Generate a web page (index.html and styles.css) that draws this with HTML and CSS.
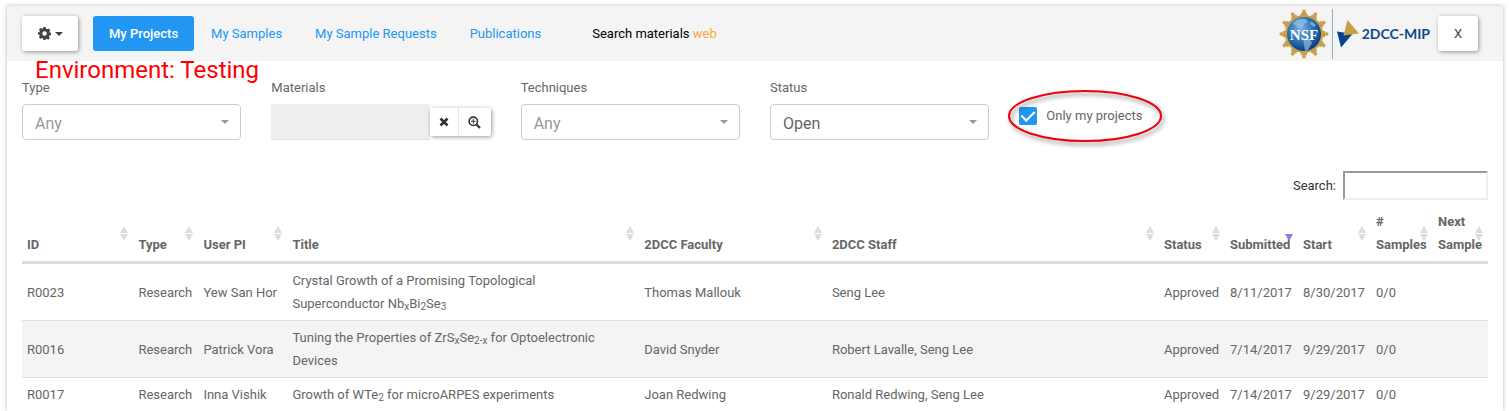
FILE: index.html
```html
<!DOCTYPE html>
<html lang="en">
<head>
<meta charset="utf-8">
<title>My Projects</title>
<link rel="stylesheet" href="styles.css">
</head>
<body>
<main class="panel">
  <header class="topbar">
    <button class="btn btn-menu" type="button" aria-label="Settings">
      <svg width="13" height="13" viewBox="0 0 16 16" aria-hidden="true"><path fill="#444" fill-rule="evenodd" d="M6.600 0h2.800l.5 2.200 1.200.6 2.100-1 1.900 2-1.100 1.900.5 1.100 1.500.4v2.900l-2 .5-.5 1.200 1.100 2-2 1.900-1.900-1.100-1.200.5L9 16H6.600l-.5-2.100-1.100-.5-2 1.100-1.900-1.900 1.100-2-.5-1.100L0 9.400V6.700l1.900-.5.4-1.100-1.100-2 2-1.900 1.900 1.100 1-.5zM8 5.200a2.800 2.800 0 1 0 0 5.600 2.800 2.800 0 0 0 0-5.600z"/></svg>
      <span class="caret"></span>
    </button>
    <nav class="tabs">
      <a class="tab tab-active" href="#">My Projects</a>
      <a class="tab" href="#">My Samples</a>
      <a class="tab" href="#">My Sample Requests</a>
      <a class="tab" href="#">Publications</a>
    </nav>
    <div class="materials-link">Search materials <a href="#">web</a></div>
    <div class="brand">
      <svg class="nsf" width="50" height="50" viewBox="0 0 50 50" role="img" aria-label="NSF">
        <defs>
          <radialGradient id="globe" cx="40%" cy="35%" r="65%">
            <stop offset="0" stop-color="#7fb2dc"/><stop offset=".55" stop-color="#2f74b5"/><stop offset="1" stop-color="#0b3f83"/>
          </radialGradient>
          <g id="ray"><path d="M20 8 23.500 3.500h3L30 8z" fill="#c6a04a"/><circle cx="25" cy="2.200" r="1.800" fill="#c6a04a"/><path d="M22 4.500h6" stroke="#c6a04a" stroke-width="1.400"/></g>
        </defs>
        <circle cx="25" cy="25" r="19" fill="#c6a04a"/>
        <use href="#ray"/><use href="#ray" transform="rotate(30 25 25)"/><use href="#ray" transform="rotate(60 25 25)"/><use href="#ray" transform="rotate(90 25 25)"/><use href="#ray" transform="rotate(120 25 25)"/><use href="#ray" transform="rotate(150 25 25)"/><use href="#ray" transform="rotate(180 25 25)"/><use href="#ray" transform="rotate(210 25 25)"/><use href="#ray" transform="rotate(240 25 25)"/><use href="#ray" transform="rotate(270 25 25)"/><use href="#ray" transform="rotate(300 25 25)"/><use href="#ray" transform="rotate(330 25 25)"/>
        <circle cx="25" cy="25" r="17" fill="url(#globe)"/>
        <path d="M14 14c3-4 8-5 13-4l2 3-4 2-1 3-4 1-3-2zM24 29l7 1 2 4-4 7-3 1-1-6zM32 12l5 4-2 2-4-3z" fill="#a9cbe6" opacity=".6"/>
        <text class="nsf-text" x="25" y="31" text-anchor="middle">NSF</text>
      </svg>
      <span class="brand-rule"></span>
      <svg width="24" height="30" viewBox="0 0 24 30" aria-hidden="true"><path d="M1 12.500 16.500 15 5 28.500z" fill="#06458c"/><path d="M11.500 1 23 14.500 7.500 16.500z" fill="#c6a049"/></svg>
      <span class="brand-name">2DCC-MIP</span>
    </div>
    <button class="btn btn-close" type="button">X</button>
  </header>
  <div class="environment">Environment: Testing</div>

  <form class="filters">
    <div class="field">
      <label for="type">Type</label>
      <div class="select"><select id="type" class="muted"><option>Any</option></select><span class="caret"></span></div>
    </div>
    <div class="field">
      <label for="materials">Materials</label>
      <div class="picker">
        <input id="materials" type="text" readonly>
        <div class="picker-buttons">
          <button type="button" aria-label="Clear"><svg width="10" height="10" viewBox="0 0 10 10"><path d="M1.500 1.500l7 7m0-7-7 7" stroke="#333" stroke-width="2.600"/></svg></button>
          <button type="button" aria-label="Find"><svg width="13" height="13" viewBox="0 0 13 13" fill="none" stroke="#333"><circle cx="5.300" cy="5.300" r="4.200" stroke-width="1.600"/><path d="M8.500 8.500l3.500 3.500" stroke-width="2.200"/><path d="M5.300 3v4.600M3 5.300h4.600"/></svg></button>
        </div>
      </div>
    </div>
    <div class="field">
      <label for="techniques">Techniques</label>
      <div class="select"><select id="techniques" class="muted"><option>Any</option></select><span class="caret"></span></div>
    </div>
    <div class="field">
      <label for="status">Status</label>
      <div class="select"><select id="status"><option>Open</option></select><span class="caret"></span></div>
    </div>
    <div class="field field-check">
      <label class="check"><input type="checkbox" checked><span>Only my projects</span></label>
      <svg class="highlight" width="164" height="62" viewBox="0 0 164 62" aria-hidden="true"><ellipse cx="80" cy="28" rx="76" ry="25" fill="none" stroke="#f0000b" stroke-width="2"/></svg>
    </div>
  </form>

  <section class="results">
    <div class="search"><label for="search">Search:</label><input id="search" type="search"></div>
    <table>
      <colgroup><col class="c-id"><col class="c-type"><col class="c-pi"><col class="c-title"><col class="c-faculty"><col class="c-staff"><col class="c-status"><col class="c-date"><col class="c-date"><col class="c-samples"><col class="c-next"></colgroup>
      <thead>
        <tr><th>ID</th><th>Type</th><th>User PI</th><th>Title</th><th>2DCC Faculty</th><th>2DCC Staff</th><th>Status</th><th class="sorted">Submitted</th><th>Start</th><th># Samples</th><th>Next Sample</th></tr>
      </thead>
      <tbody>
        <tr><td>R0023</td><td>Research</td><td>Yew San Hor</td><td class="title">Crystal Growth of a Promising Topological Superconductor Nb<sub>x</sub>Bi<sub>2</sub>Se<sub>3</sub></td><td>Thomas Mallouk</td><td>Seng Lee</td><td>Approved</td><td>8/11/2017</td><td>8/30/2017</td><td>0/0</td><td></td></tr>
        <tr><td>R0016</td><td>Research</td><td>Patrick Vora</td><td class="title">Tuning the Properties of ZrS<sub>x</sub>Se<sub>2-x</sub> for Optoelectronic Devices</td><td>David Snyder</td><td>Robert Lavalle, Seng Lee</td><td>Approved</td><td>7/14/2017</td><td>9/29/2017</td><td>0/0</td><td></td></tr>
        <tr><td>R0017</td><td>Research</td><td>Inna Vishik</td><td class="title">Growth of WTe<sub>2</sub> for microARPES experiments</td><td>Joan Redwing</td><td>Ronald Redwing, Seng Lee</td><td>Approved</td><td>7/14/2017</td><td>9/29/2017</td><td>0/0</td><td></td></tr>
      </tbody>
    </table>
  </section>
</main>
</body>
</html>
```
FILE: styles.css
```css
* { box-sizing: border-box; }

body {
  margin: 0;
  padding: 6px 6px 0 7px;
  background: #fff;
  color: #666;
  font: 13px/23px Roboto, "Liberation Sans", sans-serif;
}

button, input, select { font: inherit; color: inherit; margin: 0; }

a { color: #2196f3; text-decoration: none; }

.panel {
  position: relative;
  background: #fff;
  box-shadow: 0 0 4px rgba(0, 0, 0, 0.3);
}

.topbar {
  display: flex;
  align-items: center;
  height: 55px;
  padding: 0 25px 0 15px;
  background: #f4f4f4;
}

.btn {
  display: flex;
  align-items: center;
  justify-content: center;
  height: 35px;
  padding: 0;
  border: 0;
  border-radius: 3px;
  background: #fff;
  color: #444;
  box-shadow: 1px 1px 4px rgba(0, 0, 0, 0.4);
}

.btn-menu { width: 56px; gap: 4px; }
.btn-close { width: 40px; margin-left: 8px; }

.caret {
  border: 4px solid transparent;
  border-top-color: currentColor;
  border-bottom: 0;
}

.tabs { display: flex; gap: 1px; margin-left: 15px; }

.tab { padding: 6px 16px; border-radius: 3px; }

.tab-active { background: #2196f3; color: #fff; font-weight: 500; }

.materials-link { margin-left: 35px; color: #000; }
.materials-link a { color: #ffa63d; }

.brand { display: flex; align-items: center; margin-left: auto; }
.nsf-text { font: bold 15px "Liberation Serif", serif; fill: #fff; }
.brand-rule { width: 1px; height: 50px; margin: 0 3px; background: #8fb0cc; }
.brand-name { margin-left: 2px; color: #0b4a8f; font: bold 14px/20px Lato, sans-serif; }

.environment {
  position: absolute;
  top: 50px;
  left: 28px;
  color: #f00;
  font-size: 24px;
  line-height: 28px;
}

.filters {
  display: grid;
  grid-template-columns: repeat(6, minmax(0, 1fr));
  padding-top: 15px;
}

.field { padding: 0 15px; }
.field > label { display: block; margin-bottom: 5px; }

.select { position: relative; }
.select select {
  display: block;
  width: 100%;
  height: 36px;
  padding: 2px 28px 0 12px;
  border: 1px solid #ccc;
  border-radius: 4px;
  background: #fff;
  font-size: 16px;
  appearance: none;
}
.select .muted { color: #999; }
.select .caret { position: absolute; right: 12px; top: 16px; color: #999; pointer-events: none; }

.picker { display: flex; align-items: center; }
.picker input {
  flex: 1;
  min-width: 0;
  height: 36px;
  border: 0;
  border-bottom: 1px solid #ddd;
  background: #eee;
}
.picker-buttons {
  display: flex;
  height: 28px;
  border-radius: 3px;
  box-shadow: 1px 1px 4px rgba(0, 0, 0, 0.4);
}
.picker-buttons button {
  display: flex;
  align-items: center;
  justify-content: center;
  width: 28px;
  padding: 0;
  border: 0;
  background: #fff;
}
.picker-buttons button + button {
  width: 33px;
  border-left: 1px solid #e4e4e4;
  border-radius: 0 3px 3px 0;
}

.field-check { position: relative; padding-top: 28px; }
.field-check .check { display: flex; align-items: center; gap: 9px; }
.check input {
  display: grid;
  place-items: center;
  width: 18px;
  height: 18px;
  padding-bottom: 3px;
  appearance: none;
  border-radius: 2px;
  background: #2196f3;
}
.check input::before {
  content: "";
  width: 6px;
  height: 11px;
  border: solid #fff;
  border-width: 0 2px 2px 0;
  transform: rotate(45deg);
}
.highlight {
  position: absolute;
  top: 12px;
  left: 1px;
  filter: drop-shadow(2px 3px 2px rgba(0, 0, 0, 0.45));
  pointer-events: none;
}

.results { padding: 31px 15px 0; }

.search {
  display: flex;
  align-items: center;
  justify-content: flex-end;
  gap: 7px;
  margin-bottom: 5px;
  color: #333;
}
.search input {
  width: 145px;
  height: 29px;
  border: 2px solid;
  border-color: #999 #eee #eee #999;
  background: #fff;
  appearance: none;
}

table { width: 100%; border-collapse: separate; border-spacing: 0; table-layout: fixed; }
.c-id { width: 7.6%; }
.c-type { width: 65px; }
.c-pi { width: 89px; }
.c-title { width: 24%; }
.c-faculty { width: 12.8%; }
.c-status { width: 66px; }
.c-date { width: 73px; }
.c-samples { width: 62px; }
.c-next { width: 55px; }

th, td { padding: 5px; text-align: left; white-space: nowrap; }

th {
  position: relative;
  border-bottom: 3px solid #ddd;
  vertical-align: bottom;
  font-weight: 700;
  white-space: normal;
}
th::before, th::after {
  content: "";
  position: absolute;
  right: 5px;
  border: solid transparent;
  border-width: 0 4px;
}
th::before { top: 21px; border-bottom: 7px solid #ddd; }
th::after { top: 29px; border-top: 7px solid #ddd; }
th.sorted::before { display: none; }
th.sorted::after { border-top-color: #7f7fe6; }

td { vertical-align: middle; }
td.title { padding-right: 18px; white-space: normal; }
tbody tr:nth-child(even) { background: #f4f4f4; }
tbody tr + tr td { border-top: 1px solid #ddd; }

sub { font-size: 10px; line-height: 0; vertical-align: -2px; }
```
